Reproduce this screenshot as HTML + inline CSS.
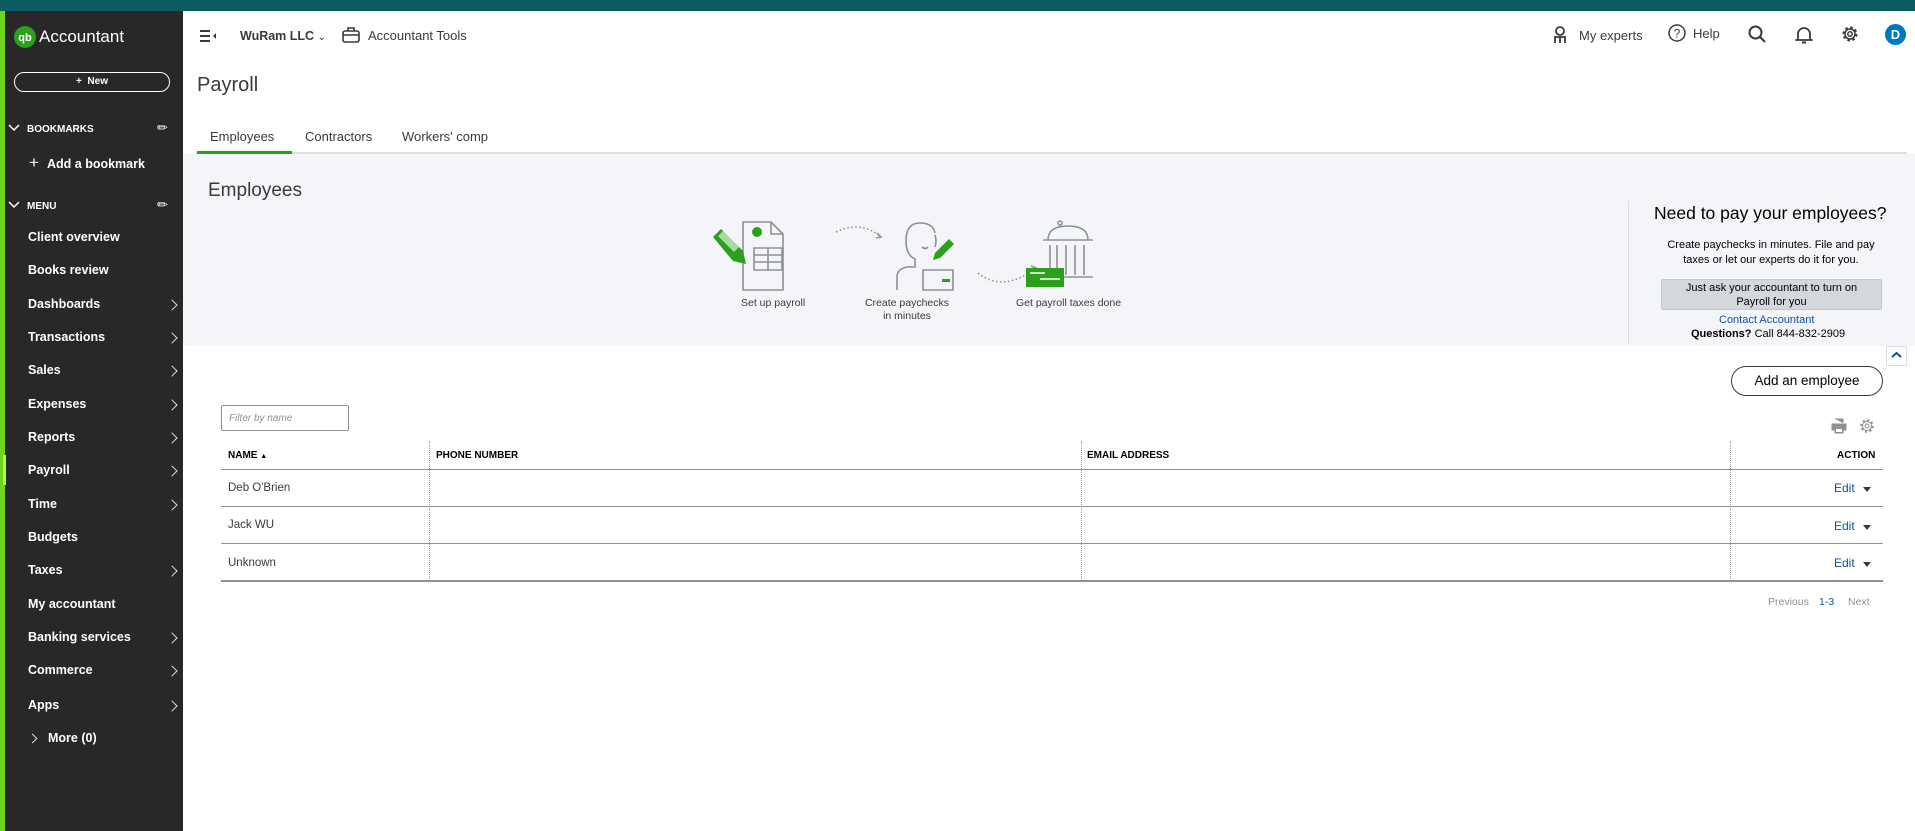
<!DOCTYPE html>
<html><head><meta charset="utf-8"><style>
*{margin:0;padding:0;box-sizing:border-box}
body{width:1915px;height:831px;overflow:hidden;background:#fff;font-family:"Liberation Sans",sans-serif;color:#393a3d;position:relative}
.a{position:absolute;white-space:nowrap}
#top{left:0;top:0;width:1915px;height:11px;background:#0b5b63}
#side{left:0;top:11px;width:183px;height:820px;background:#282828;border-left:5px solid #6fd41a}
.si{position:absolute;left:28px;color:#fff;font-weight:bold;font-size:12.5px}
.ch{position:absolute;left:163px;width:8px;height:8px;border-right:1.6px solid #ddd;border-top:1.6px solid #ddd;transform:rotate(45deg)}
.hd{font-size:13px;color:#393a3d}
.th{font-size:10px;font-weight:bold;color:#000}
.td{font-size:11.5px;color:#393a3d}
.edit{font-size:12px;color:#0d52a3}
.hl{position:absolute;left:221px;width:1662px;height:1px;background:#8d9096}
.vl{position:absolute;top:441px;height:140px;border-left:1px dotted #999}
.car{position:absolute;width:0;height:0;border-left:4px solid transparent;border-right:4px solid transparent;border-top:5px solid #393a3d}
</style></head><body>
<div class="a" id="top"></div>
<div class="a" id="side">
 <svg style="position:absolute;left:9px;top:15px" width="22" height="22"><circle cx="11" cy="11" r="11" fill="#2ca01c"/><text x="11" y="15" font-size="11" font-weight="bold" fill="#fff" text-anchor="middle" font-family="Liberation Sans">qb</text></svg>
 <div class="a" style="left:34px;top:16px;color:#fff;font-size:17px">Accountant</div>
 <div class="a" style="left:9px;top:61px;width:156px;height:20px;border:1.5px solid #fff;border-radius:10px;color:#fff;font-size:10px;font-weight:bold;text-align:center;line-height:17px">+&nbsp;&nbsp;New</div>
 <svg class="a" style="left:3px;top:113px" width="12" height="8"><path d="M1 1l5 5 5-5" fill="none" stroke="#fff" stroke-width="1.5"/></svg>
 <div class="a" style="left:22px;top:113px;color:#fff;font-size:10px;font-weight:bold">BOOKMARKS</div>
 <div class="a" style="left:152px;top:109px;color:#fff;font-size:13px">&#9999;</div>
 <div class="a" style="left:24px;top:142px;color:#fff;font-size:17px;font-weight:300">+</div>
 <div class="a" style="left:42px;top:146px;color:#fff;font-size:12.5px;font-weight:bold">Add a bookmark</div>
 <svg class="a" style="left:3px;top:190px" width="12" height="8"><path d="M1 1l5 5 5-5" fill="none" stroke="#fff" stroke-width="1.5"/></svg>
 <div class="a" style="left:22px;top:190px;color:#fff;font-size:10px;font-weight:bold">MENU</div>
 <div class="a" style="left:152px;top:186px;color:#fff;font-size:13px">&#9999;</div>
 <div class="si" style="top:219px;left:23px">Client overview</div>
 <div class="si" style="top:252px;left:23px">Books review</div>
 <div class="si" style="top:286px;left:23px">Dashboards</div><div class="ch" style="top:290px"></div>
 <div class="si" style="top:319px;left:23px">Transactions</div><div class="ch" style="top:323px"></div>
 <div class="si" style="top:352px;left:23px">Sales</div><div class="ch" style="top:356px"></div>
 <div class="si" style="top:386px;left:23px">Expenses</div><div class="ch" style="top:390px"></div>
 <div class="si" style="top:419px;left:23px">Reports</div><div class="ch" style="top:423px"></div>
 <div class="si" style="top:452px;left:23px">Payroll</div><div class="ch" style="top:456px"></div>
 <div class="si" style="top:486px;left:23px">Time</div><div class="ch" style="top:490px"></div>
 <div class="si" style="top:519px;left:23px">Budgets</div>
 <div class="si" style="top:552px;left:23px">Taxes</div><div class="ch" style="top:556px"></div>
 <div class="si" style="top:586px;left:23px">My accountant</div>
 <div class="si" style="top:619px;left:23px">Banking services</div><div class="ch" style="top:623px"></div>
 <div class="si" style="top:652px;left:23px">Commerce</div><div class="ch" style="top:656px"></div>
 <div class="si" style="top:687px;left:23px">Apps</div><div class="ch" style="top:691px"></div>
 <div class="ch" style="top:724px;left:24px;width:7px;height:7px"></div>
 <div class="si" style="top:720px;left:43px">More (0)</div>
</div>
<div class="a" style="left:3px;top:455px;width:3px;height:30px;background:#b8f05a"></div>

<svg class="a" style="left:199px;top:29px" width="18" height="14"><path d="M1 2h10M1 7h10M1 12h10" stroke="#393a3d" stroke-width="2"/><path d="M17 4l-3 3 3 3z" fill="#393a3d"/></svg>
<div class="a hd" style="left:240px;top:29px;font-weight:bold;font-size:12.5px">WuRam LLC <span style="font-size:10px;font-weight:normal">&#8964;</span></div>
<svg class="a" style="left:342px;top:26px" width="18" height="17"><rect x="1" y="5" width="16" height="11" rx="2" fill="none" stroke="#393a3d" stroke-width="1.6"/><path d="M6 5V2h6v3M1 9h16" fill="none" stroke="#393a3d" stroke-width="1.6"/></svg>
<div class="a hd" style="left:368px;top:28px">Accountant Tools</div>
<svg class="a" style="left:1553px;top:26px" width="14" height="18"><circle cx="7" cy="5" r="4" fill="none" stroke="#393a3d" stroke-width="1.8"/><path d="M2 17V11h10v6M7 11v6" fill="none" stroke="#393a3d" stroke-width="1.8"/></svg>
<div class="a hd" style="left:1579px;top:28px">My experts</div>
<svg class="a" style="left:1668px;top:24px" width="18" height="18"><circle cx="9" cy="9" r="8" fill="none" stroke="#393a3d" stroke-width="1.5"/><text x="9" y="13.5" font-size="12" text-anchor="middle" fill="#393a3d" font-family="Liberation Sans">?</text></svg>
<div class="a hd" style="left:1693px;top:26px">Help</div>
<svg class="a" style="left:1748px;top:25px" width="18" height="18"><circle cx="7.5" cy="7.5" r="6" fill="none" stroke="#393a3d" stroke-width="2"/><path d="M12 12l5 5" stroke="#393a3d" stroke-width="2"/></svg>
<svg class="a" style="left:1795px;top:25px" width="18" height="20"><path d="M3 15V9a6 6 0 0 1 12 0v6h2H1z" fill="none" stroke="#393a3d" stroke-width="1.8" stroke-linejoin="round"/><path d="M7 17.5h4" stroke="#393a3d" stroke-width="2"/></svg>
<svg class="a" style="left:1841px;top:25px" width="18" height="18"><circle cx="9" cy="9" r="6" fill="none" stroke="#393a3d" stroke-width="3" stroke-dasharray="2.4 2.3"/><circle cx="9" cy="9" r="5" fill="none" stroke="#393a3d" stroke-width="1.5"/><circle cx="9" cy="9" r="2.2" fill="none" stroke="#393a3d" stroke-width="1.5"/></svg>
<div class="a" style="left:1885px;top:24px;width:21px;height:21px;border-radius:50%;background:#0077c5;color:#fff;font-weight:bold;font-size:13px;text-align:center;line-height:21px">D</div>

<div class="a" style="left:197px;top:74px;font-size:20px;color:#393a3d">Payroll</div>
<div class="a" style="left:210px;top:129px;font-size:13px;color:#393a3d">Employees</div>
<div class="a" style="left:305px;top:129px;font-size:13px;color:#393a3d">Contractors</div>
<div class="a" style="left:402px;top:129px;font-size:13px;color:#393a3d">Workers' comp</div>
<div class="a" style="left:196px;top:152px;width:1711px;height:2px;background:#dcdde0"></div>
<div class="a" style="left:197px;top:151px;width:95px;height:3px;background:#2ca01c"></div>

<div class="a" style="left:183px;top:154px;width:1732px;height:192px;background:#f4f5f8"></div>
<div class="a" style="left:208px;top:180px;font-size:19px;color:#393a3d">Employees</div>
<svg class="a" style="left:710px;top:215px" width="420" height="80">
 <g fill="none" stroke="#8d9096" stroke-width="1.6">
  <path d="M33 7h28l12 12v56H33z"/><path d="M61 7v12h12"/>
  <path d="M44 33h28v22H44zM44 40h28M44 47h28M58 33v22"/>
  <path d="M126 17q25-12 45 5" stroke-dasharray="1.5 2.5"/><path d="M167 18l4 4-5 1"/>
  <path d="M187 75V62q0-8 10-10h8v-8q-9-4-9-18 0-18 14-18 13 0 15 10"/><path d="M212 32q3 3 6 0"/><path d="M225 20q2 6 0 12"/>
  <path d="M213 55h30v20h-30z"/>
  <path d="M268 58q25 20 58-5" stroke-dasharray="1.5 2.5"/><path d="M321 51l5 2-3 4"/>
  <circle cx="350" cy="8" r="2"/><path d="M338 25q0-14 20-14t20 14zM333 25h50M340 30v30M347 30v30M356 30v30M365 30v30M374 30v30M333 62h50"/>
 </g>
 <circle cx="47" cy="17" r="5" fill="#2ca01c"/>
 <path d="M3 22l8-8 22 22 3 13-13-3z" fill="#2ca01c"/><path d="M8 21l5-5 16 16-5 5z" fill="#fff" opacity=".6"/>
 <path d="M239 24l5 5-14 14-7 2 2-7z" fill="#2ca01c"/><rect x="232" y="64" width="8" height="3" fill="#2ca01c"/>
 <rect x="316" y="53" width="38" height="19" fill="#2ca01c"/><path d="M320 58h15M330 64h20" stroke="#fff" stroke-width="1.5"/>
</svg>
<div class="a" style="left:741px;top:297px;font-size:10.5px">Set up payroll</div>
<div class="a" style="left:862px;top:297px;font-size:10.5px;text-align:center;line-height:13px;width:90px">Create paychecks<br>in minutes</div>
<div class="a" style="left:1016px;top:297px;font-size:10.5px">Get payroll taxes done</div>
<div class="a" style="left:1628px;top:201px;width:1px;height:143px;background:#dcdde0"></div>
<div class="a" style="left:1654px;top:203px;font-size:17.5px;color:#000">Need to pay your employees?</div>
<div class="a" style="left:1655px;top:238px;font-size:11px;color:#000;text-align:center;width:232px;line-height:15px">Create paychecks in minutes. File and pay<br>taxes or let our experts do it for you.</div>
<div class="a" style="left:1661px;top:279px;width:221px;height:31px;background:#d4d7dc;border:1px solid #c4c7cc;border-radius:2px;font-size:11px;color:#000;text-align:center;line-height:14px;padding-top:1px">Just ask your accountant to turn on<br>Payroll for you</div>
<div class="a" style="left:1719px;top:314px;font-size:11px;color:#0d52a3">Contact Accountant</div>
<div class="a" style="left:1691px;top:328px;font-size:11px;color:#000"><b>Questions?</b> Call 844-832-2909</div>
<div class="a" style="left:1886px;top:346px;width:21px;height:20px;border:1px solid #dcdde0;background:#fff"></div>
<svg class="a" style="left:1890px;top:350px" width="13" height="10"><path d="M2 7l4.5-4 4.5 4" fill="none" stroke="#0d52a3" stroke-width="2"/></svg>

<div class="a" style="left:1731px;top:366px;width:152px;height:30px;border:1.5px solid #393a3d;border-radius:15px;text-align:center;font-size:13.5px;line-height:27px;color:#000">Add an employee</div>
<div class="a" style="left:221px;top:405px;width:128px;height:26px;border:1px solid #8d9096;border-radius:2px;font-size:10px;font-style:italic;color:#8d9096;padding:7px 0 0 7px">Filter by name</div>
<svg class="a" style="left:1831px;top:418px" width="16" height="16"><path d="M4 1h8v4M1 6h14v6H1zM4 10h8v5H4z" fill="#8d9096" stroke="#8d9096" stroke-width="1"/><path d="M5 11h6v3H5z" fill="#fff"/></svg>
<svg class="a" style="left:1859px;top:418px" width="16" height="16"><circle cx="8" cy="8" r="5.5" fill="none" stroke="#8d9096" stroke-width="2.6" stroke-dasharray="2 2.3"/><circle cx="8" cy="8" r="4.5" fill="none" stroke="#8d9096" stroke-width="1"/><circle cx="8" cy="8" r="2" fill="none" stroke="#8d9096" stroke-width="1"/></svg>

<div class="a th" style="left:228px;top:450px">NAME <span style="font-size:7px">&#9650;</span></div>
<div class="a th" style="left:436px;top:450px">PHONE NUMBER</div>
<div class="a th" style="left:1087px;top:450px">EMAIL ADDRESS</div>
<div class="a th" style="left:1837px;top:450px">ACTION</div>
<div class="vl" style="left:429px"></div><div class="vl" style="left:1081px"></div><div class="vl" style="left:1730px"></div>
<div class="hl" style="top:469px"></div><div class="hl" style="top:506px"></div><div class="hl" style="top:543px"></div><div class="hl" style="top:580px;height:2px"></div>
<div class="a td" style="left:228px;top:482px">Deb O'Brien</div>
<div class="a td" style="left:228px;top:519px">Jack WU</div>
<div class="a td" style="left:228px;top:557px">Unknown</div>
<div class="a edit" style="left:1834px;top:481px">Edit</div><div class="car" style="left:1863px;top:487px"></div>
<div class="a edit" style="left:1834px;top:519px">Edit</div><div class="car" style="left:1863px;top:525px"></div>
<div class="a edit" style="left:1834px;top:556px">Edit</div><div class="car" style="left:1863px;top:562px"></div>
<div class="a" style="left:1768px;top:596px;font-size:10.5px;color:#8d9096">Previous</div>
<div class="a" style="left:1819px;top:596px;font-size:10.5px;color:#0d52a3">1-3</div>
<div class="a" style="left:1848px;top:596px;font-size:10.5px;color:#8d9096">Next</div>
</body></html>
